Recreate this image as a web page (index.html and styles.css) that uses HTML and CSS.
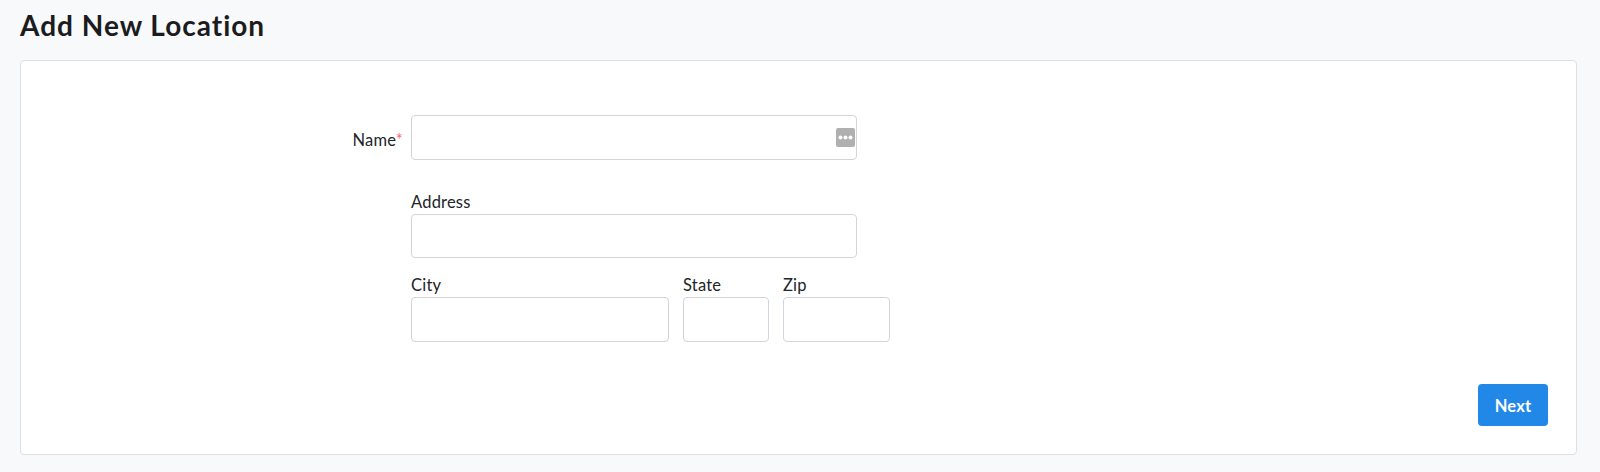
FILE: index.html
```html
<!DOCTYPE html>
<html lang="en">
<head>
  <meta charset="UTF-8">
  <meta name="viewport" content="width=device-width, initial-scale=1.0">
  <title>Add New Location</title>
  <link rel="stylesheet" href="styles.css">
</head>
<body>
  <h1 class="page-title">Add New Location</h1>
  <div class="card">
    <div class="name-row">
      <label class="name-label" for="name">Name<span class="required">*</span></label>
      <div class="input-wrap">
        <input type="text" id="name" class="field field-name">
        <span class="dots-badge">
          <svg width="19" height="19" viewBox="0 0 19 19">
            <rect width="19" height="19" rx="2" fill="#b0b0b0"/>
            <circle cx="4.5" cy="9.5" r="2" fill="#fff"/>
            <circle cx="9.5" cy="9.5" r="2" fill="#fff"/>
            <circle cx="14.5" cy="9.5" r="2" fill="#fff"/>
          </svg>
        </span>
      </div>
    </div>
    <div class="address-block">
      <div class="group">
        <label for="address">Address</label>
        <input type="text" id="address" class="field field-address">
      </div>
      <div class="city-row">
        <div class="group">
          <label for="city">City</label>
          <input type="text" id="city" class="field field-city">
        </div>
        <div class="group">
          <label for="state">State</label>
          <input type="text" id="state" class="field field-state">
        </div>
        <div class="group">
          <label for="zip">Zip</label>
          <input type="text" id="zip" class="field field-zip">
        </div>
      </div>
    </div>
    <div class="actions">
      <button class="next-btn">Next</button>
    </div>
  </div>
</body>
</html>
```

FILE: styles.css
```css
html, body {
  height: 100%;
}
body {
  margin: 0;
  padding: 0 23px 18px 20px;
  box-sizing: border-box;
  overflow: hidden;
  background-color: #f8f9fb;
  color: #212529;
  font-family: Lato, "Liberation Sans", sans-serif;
  font-size: 16.5px;
  letter-spacing: 0.2px;
}
.page-title {
  margin: 0;
  padding-top: 8px;
  height: 60px;
  box-sizing: border-box;
  font-size: 28px;
  line-height: 34px;
  font-weight: 700;
  letter-spacing: 1px;
  color: #1c1c1f;
}
.card {
  height: 395px;
  box-sizing: border-box;
  padding: 54px 30px 0 0;
  background-color: #fff;
  border: 1px solid #dcdfe6;
  border-radius: 4px;
}
.name-row {
  display: flex;
  align-items: center;
}
.name-label {
  width: 390px;
  text-align: right;
  padding: 4px 8px 0 0;
  box-sizing: border-box;
}
.required {
  color: #f7687a;
}
.input-wrap {
  position: relative;
}
.field {
  display: block;
  box-sizing: border-box;
  height: 45px;
  padding: 6px 12px;
  background-color: #fff;
  border: 1px solid #d2d4da;
  border-radius: 4px;
}
.field-name, .field-address {
  width: 446px;
}
.field-address {
  height: 44px;
}
.field-city {
  width: 258px;
}
.field-state {
  width: 86px;
}
.field-zip {
  width: 107px;
}
.dots-badge {
  position: absolute;
  right: 2px;
  top: 13px;
  line-height: 0;
}
.address-block {
  margin: 32px 0 0 390px;
}
.group label {
  display: block;
  line-height: 20px;
  height: 22px;
}
.city-row {
  display: flex;
  gap: 14px;
  margin-top: 17px;
}
.actions {
  display: flex;
  justify-content: flex-end;
  margin-top: 42px;
}
.next-btn {
  width: 70px;
  height: 42px;
  margin-right: -2px;
  padding-top: 3px;
  background-color: #2188e8;
  border: 0;
  border-radius: 4px;
  color: #fff;
  font-family: inherit;
  font-size: 16.5px;
  font-weight: 700;
  letter-spacing: 0.2px;
}
```
